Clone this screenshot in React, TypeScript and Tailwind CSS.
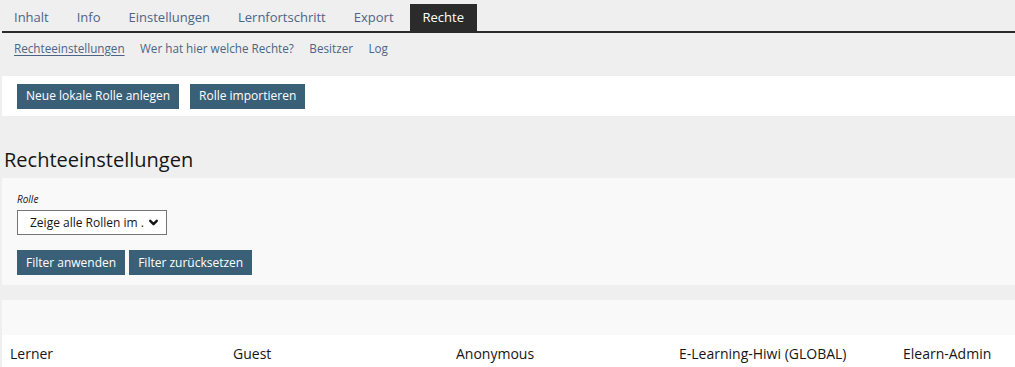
import { ChevronDown } from 'lucide-react';

const tabs = ['Inhalt', 'Info', 'Einstellungen', 'Lernfortschritt', 'Export', 'Rechte'];
const subtabs = ['Rechteeinstellungen', 'Wer hat hier welche Rechte?', 'Besitzer', 'Log'];
const roles = ['Lerner', 'Guest', 'Anonymous', 'E-Learning-Hiwi (GLOBAL)', 'Elearn-Admin'];

function Btn({ children }: { children: React.ReactNode }) {
  return (
    <button className="h-[25px] px-[9px] bg-[#3a6078] text-white text-[12px] font-medium leading-none">
      {children}
    </button>
  );
}

export default function App() {
  return (
    <div className="min-h-screen bg-[#efefef] text-[#333] font-['Open_Sans',sans-serif] overflow-hidden">
      {/* tabs */}
      <div className="pt-[4px] ml-[2px] flex items-end border-b-2 border-[#2b2b2b] h-[33px]">
        {tabs.map((t) => (
          <div
            key={t}
            className={
              t === 'Rechte'
                ? 'h-[27px] px-[13px] ml-[2px] flex items-center text-[13px] bg-[#2b2b2b] text-white'
                : 'h-[27px] px-[14px] flex items-center text-[13px] text-[#4c6586] first:pl-[12px]'
            }
          >
            {t}
          </div>
        ))}
      </div>

      {/* sub tabs */}
      <div className="flex gap-[15.5px] pl-[14px] h-[30px] items-center text-[11.7px] text-[#4c6586] pt-[1px]">
        {subtabs.map((s, i) => (
          <span key={s} className={i === 0 ? 'underline underline-offset-2' : ''}>
            {s}
          </span>
        ))}
      </div>

      {/* toolbar */}
      <div className="mt-[13px] ml-[2px] bg-white h-[40px] flex items-center gap-[11px] pl-[15px]">
        <Btn>Neue lokale Rolle anlegen</Btn>
        <Btn>Rolle importieren</Btn>
      </div>

      <h2 className="mt-[32px] pl-[4px] text-[20px] leading-[24px] text-[#161616] font-normal">
        Rechteeinstellungen
      </h2>

      {/* filter */}
      <div className="mt-[6px] ml-[2px] bg-[#f9f9f9] h-[107px] pl-[15px] pt-[14px]">
        <div className="text-[10px] italic leading-[14px] text-[#161616]">Rolle</div>
        <div className="mt-[4px] w-[150px] h-[25px] border border-[#757575] bg-white flex items-center justify-between pl-[12px] pr-[6px]">
          <span className="text-[12px] text-[#161616]">Zeige alle Rollen im .</span>
          <ChevronDown className="w-[13px] h-[13px] text-[#161616]" strokeWidth={4.5} />
        </div>
        <div className="mt-[15px] flex gap-[4px]">
          <Btn>Filter anwenden</Btn>
          <Btn>Filter zurücksetzen</Btn>
        </div>
      </div>

      {/* table */}
      <div className="mt-[15px] ml-[2px]">
        <div className="h-[35px] bg-[#f9f9f9]" />
        <div className="bg-white h-[40px] grid grid-cols-[223px_223px_223px_224px_1fr] items-center pl-[8px] text-[14px] text-[#161616] pb-[4px]">
          {roles.map((r) => (
            <span key={r}>{r}</span>
          ))}
        </div>
      </div>
    </div>
  );
}
